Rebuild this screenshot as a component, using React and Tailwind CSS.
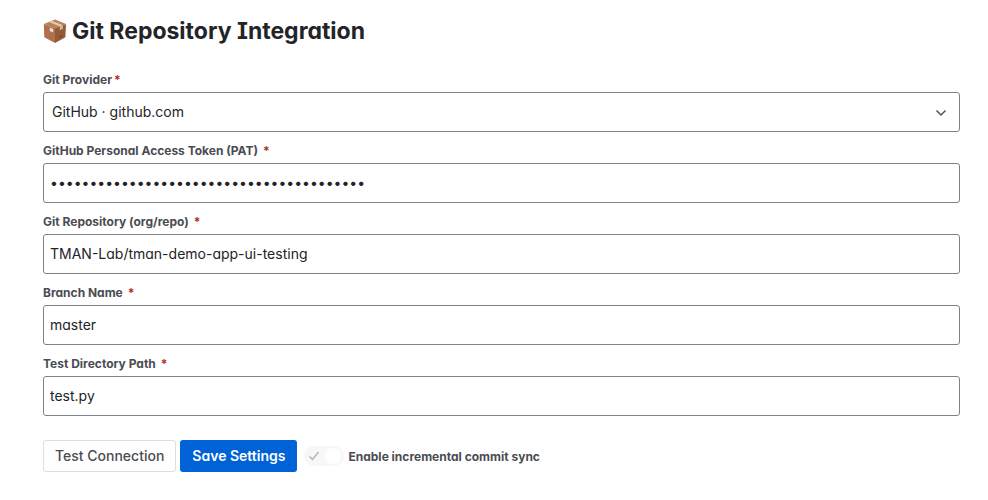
import React, {useState} from "react";

const FIELDS = [
    {id: "token", label: "GitHub Personal Access Token (PAT)", type: "password"},
    {id: "repo", label: "Git Repository (org/repo)", type: "text"},
    {id: "branch", label: "Branch Name", type: "text"},
    {id: "path", label: "Test Directory Path", type: "text"},
];

const BoxIcon = () => (
    <svg viewBox="0 0 24 24" className="size-6 shrink-0" aria-hidden="true">
        <path d="M.8 5 12 9v15L1.3 18.3z" fill="#b0714a"/>
        <path d="M12 9l11-4-.6 13.2L12 24z" fill="#935a38"/>
        <path d="M.8 5 12 .6 23 5 12 9.2z" fill="#b98059"/>
        <path d="m6 3 3-1.2L20 6.2l-3.2 1.2z" fill="#e2c8b0"/>
        <path d="m16.8 7.4 3.2-1.2v3.6l-3.2 1.4z" fill="#cdb49f"/>
        <path d="m6.8 8.6 3.4 1.4v3.6l-3.4-1.5z" fill="#e3e1e1"/>
        <path d="m16.5 17.5 2.6-1.4v1.6l-2.6 1.4z" fill="#744328"/>
    </svg>
);

const Required = ({className}) => (
    <span className={`text-[#ae2e24] ${className}`} aria-hidden="true">*</span>
);

const App = () => {
    const [provider, setProvider] = useState("github");
    const [values, setValues] = useState({
        token: "x".repeat(40),
        repo: "TMAN-Lab/tman-demo-app-ui-testing",
        branch: "master",
        path: "test.py",
    });

    const handleChange = (e) => {
        setValues({...values, [e.target.id]: e.target.value});
    };

    return (
        <main className="bg-white pt-[17px] pb-7 pl-[43px] pr-7 font-['Inter',sans-serif] text-sm text-[#232428] [font-feature-settings:'cv11','cv08']">
            <h1 className="flex items-center gap-[5px] text-[23px] leading-7 font-bold">
                <BoxIcon/>
                Git Repository Integration
            </h1>

            <form className="mt-[27px] flex flex-col gap-[11px]" onSubmit={(e) => e.preventDefault()}>
                <div>
                    <label htmlFor="provider" className="mb-1 block text-xs leading-4 font-[650] text-[#4a4c52]">
                        Git Provider<Required className="ml-0.5"/>
                    </label>
                    <div className="relative">
                        <select
                            id="provider"
                            className="block h-10 w-full appearance-none rounded-[3px] border border-[#7d818a] bg-white px-2 text-sm"
                            value={provider}
                            onChange={(e) => setProvider(e.target.value)}
                        >
                            <option value="github">GitHub · github.com</option>
                        </select>
                        <svg
                            viewBox="0 0 12 12"
                            className="pointer-events-none absolute top-3.5 right-[13px] size-3"
                            fill="none"
                            stroke="#505258"
                            strokeWidth="1.5"
                        >
                            <path d="m1.5 4.5 4.5 4.5 4.5-4.5"/>
                        </svg>
                    </div>
                </div>

                {FIELDS.map(({id, label, type}) => (
                    <div key={id}>
                        <label htmlFor={id} className="mb-1 block text-xs leading-4 font-[650] text-[#4a4c52]">
                            {label}<Required className="ml-[5px]"/>
                        </label>
                        <input
                            id={id}
                            type={type}
                            className="block h-10 w-full rounded-[3px] border border-[#7d818a] bg-white px-1.5 pb-0.5 text-sm"
                            value={values[id]}
                            onChange={handleChange}
                        />
                    </div>
                ))}

                {/* Actions */}
                <div className="mt-[13px] flex items-center gap-1">
                    <button
                        type="button"
                        className="h-8 rounded-[3px] border border-[#dddee1] px-[11px] font-medium text-[#4a4c52]"
                    >
                        Test Connection
                    </button>
                    <button type="submit" className="h-8 rounded-[3px] bg-[#0062d6] px-3 font-semibold text-white">
                        Save Settings
                    </button>
                    <label className="ml-[3px] flex items-center gap-1 text-xs leading-4 font-[650] text-[#4a4c52]">
                        <span className="relative flex h-5 w-10 items-center rounded-full bg-[#f7f7f7]">
                            <input type="checkbox" className="absolute inset-0 appearance-none" defaultChecked disabled/>
                            <svg
                                viewBox="0 0 12 12"
                                className="ml-1 size-3"
                                fill="none"
                                stroke="#b3b4b7"
                                strokeWidth="1.5"
                            >
                                <path d="m1.5 6.5 3 3 6-7.5"/>
                            </svg>
                            <span className="ml-[5px] size-4 rounded-full bg-white"/>
                        </span>
                        <span className="pt-0.5">Enable incremental commit sync</span>
                    </label>
                </div>
            </form>
        </main>
    );
};

export default App;
